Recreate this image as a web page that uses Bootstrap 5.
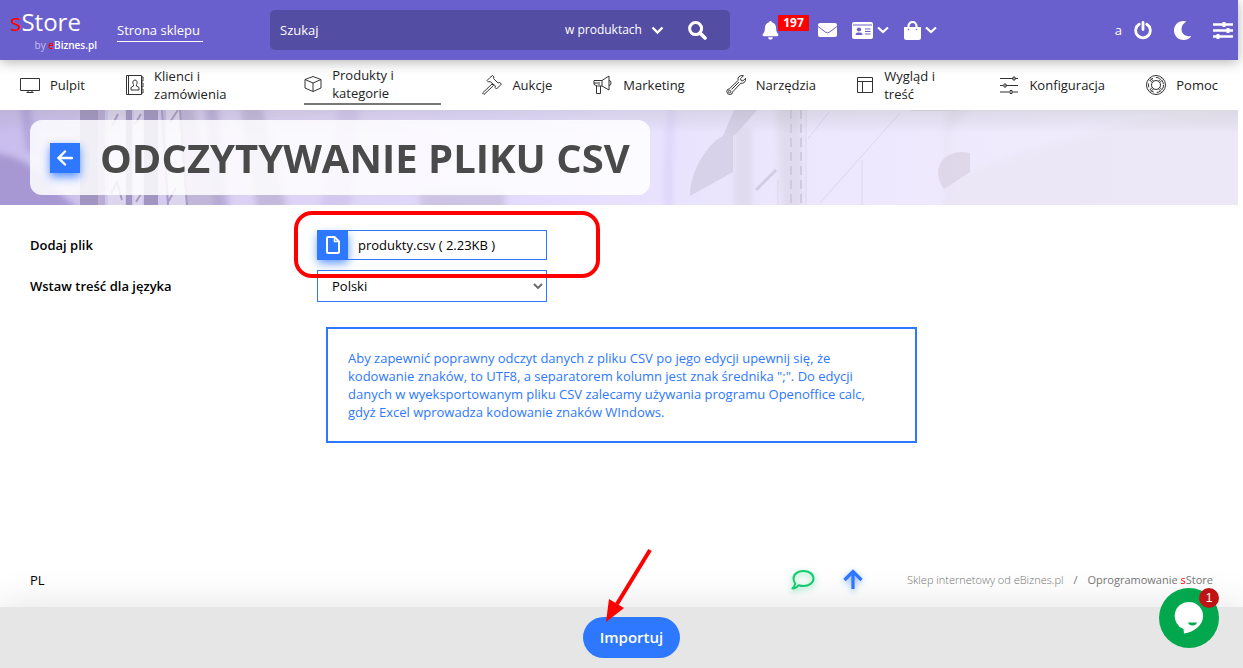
<!DOCTYPE html>
<html lang="pl">
<head>
<meta charset="utf-8">
<meta name="viewport" content="width=device-width, initial-scale=1">
<title>sStore – Odczytywanie pliku CSV</title>
<link href="https://cdn.jsdelivr.net/npm/bootstrap@5.3.0/dist/css/bootstrap.min.css" rel="stylesheet">
<style>
  :root { --accent: #2e78ff; --brand: #6a60cd; }
  body { font-family: "Open Sans", "Noto Sans", sans-serif; font-size: 13px; line-height: 18px; color: #000; background: #fff; padding-right: 5px; }
  a { color: inherit; text-decoration: none; }
  svg { flex: none; display: block; }

  .topbar { height: 60px; background: var(--brand); color: #fff; box-shadow: 0 2px 12px rgba(0,0,0,.3); z-index: 3; padding-left: 10px; padding-right: 5px; }
  .logo { width: 87px; margin-right: 20px; padding-bottom: 2px; }
  .logo-name { font-size: 24px; line-height: 32px; }
  .logo-by { font-size: 10px; line-height: 14px; color: #c3bfeb; }
  .logo-by b { color: #fff; font-weight: 600; }
  .red { color: #f00 !important; }
  .shop-link { border-bottom: 1px solid #fff; width: 86px; padding-top: 3px; padding-bottom: 2px; }
  .search { width: 460px; height: 40px; background: #544da4; border-radius: 5px; margin-left: 67px; padding: 0 23px 0 10px; }
  .search input, .search select { background: none; border: 0; outline: 0; color: #fff; padding: 0; appearance: none; }
  .search input::placeholder { color: #fff; opacity: 1; }
  .search select { font-size: 12px; width: 82px; }
  .plain { background: none; border: 0; padding: 0; color: inherit; }
  .tools { margin-left: 32px; gap: 15px; }
  .count { left: 16px; top: -6px; background: #f00; font-size: 12px; line-height: 16px; font-weight: 700; width: 31px; border-radius: 1px; text-align: center; }
  .account { gap: 22px; }

  .mainnav { height: 50px; padding: 0 20px; color: #222; }
  .mainnav a { gap: 10px; height: 39px; }
  .mainnav .wide { width: 137px; }
  .mainnav .mid { width: 102px; }
  .mainnav .current { border-bottom: 2px solid #777; }
  .mainnav svg { fill: none; stroke: #333; stroke-width: 1; }

  .hero { height: 95px; padding: 10px 30px; background: #eeeafc; }
  .hero-art { inset: 0; width: 100%; height: 100%; }
  .hero-title { height: 75px; width: 620px; max-width: 100%; background: rgba(255,255,255,.85); border-radius: 12px; padding: 0 20px; gap: 20px; }
  .hero-title h1 { font-size: 40px; line-height: 48px; font-weight: 700; color: #4a4a4a; }
  .blue-tile { width: 30px; height: 30px; background: var(--accent); color: #fff; box-shadow: 0 4px 10px rgba(46,120,255,.8); }
  .field .blue-tile { height: 28px; }

  .import-form { padding: 25px 30px 0; }
  .form-line { min-height: 30px; }
  .form-line + .form-line { margin-top: 10px; }
  .form-line > label { width: 287px; font-weight: 600; }
  .field { width: 230px; border: 1px solid var(--accent); }
  .field input, .field select { border: 0; outline: 0; background: none; color: #000; width: 100%; appearance: none; }
  .field input { padding: 0 10px; }
  .field select { padding: 0 14px; height: 30px; }
  .chevron { right: 3px; top: 12px; pointer-events: none; }
  .marker { left: -23px; top: -19px; width: 306px; height: 67px; border: 4px solid #f00; border-radius: 18px; pointer-events: none; z-index: 2; }
  .notice { margin: 25px 0 0 296px; width: 591px; border: 2px solid var(--accent); color: var(--accent); padding: 20px; }

  .foot { padding: 0 25px 16px 30px; }
  .foot-icons { gap: 28px; margin-right: 44px; }
  .foot-text { font-size: 11px; color: #777; gap: 10px; }
  .thin { font-weight: 300; }
  .action-bar { height: 61px; background: #e6e6e6; box-shadow: 0 0 40px rgba(0,0,0,.12); margin-right: -5px; padding-right: 5px; padding-left: 25px; }
  .btn-import { height: 41px; width: 97px; border-radius: 21px; background: var(--accent); color: #fff; font-size: 15px; font-weight: 600; padding: 0; }
  .btn-import:hover { background: #1c64e6; color: #fff; }
  .arrow { left: 19px; top: -70px; pointer-events: none; }
  .chat { right: 24px; bottom: 20px; width: 60px; height: 60px; border-radius: 50%; background: #03a84e; z-index: 1040; }
  .chat-count { right: 0; top: 0; width: 20px; height: 20px; line-height: 20px; border-radius: 50%; background: #c01414; color: #fff; font-size: 12px; font-family: "Liberation Sans", sans-serif; }
</style>
</head>
<body class="d-flex flex-column min-vh-100">

<header class="topbar d-flex align-items-center position-relative">
  <a href="#" class="logo">
    <div class="logo-name"><span class="red">s</span>Store</div>
    <div class="logo-by text-end"><span>by </span><b><span class="red">e</span>Biznes.pl</b></div>
  </a>
  <a href="#" class="shop-link text-nowrap">Strona sklepu</a>
  <form class="search d-flex align-items-center">
    <input type="search" class="flex-grow-1" placeholder="Szukaj" aria-label="Szukaj">
    <select aria-label="Zakres wyszukiwania"><option>w produktach</option></select>
    <svg class="ms-1 me-4" width="13" height="9" viewBox="0 0 13 9" fill="none" stroke="#fff" stroke-width="2.4"><path d="M1.500 1.500l5 5 5-5"/></svg>
    <button class="plain" type="button" aria-label="Wyszukaj"><svg width="19" height="19" viewBox="0 0 19 19" fill="none" stroke="#fff" stroke-width="3"><circle cx="7.600" cy="7.600" r="6"/><path d="M12 12l5 5" stroke-width="3.600" stroke-linecap="round"/></svg></button>
  </form>
  <div class="tools d-flex align-items-center">
    <a href="#" class="position-relative me-4" aria-label="Powiadomienia">
      <svg width="17" height="19" viewBox="0 0 16 19" fill="#fff"><path d="M8 0c.8 0 1.200.5 1.200 1.300 2.800.6 4.400 2.800 4.400 5.700 0 3.600.9 4.600 2 5.900.8 1 .2 2.300-1 2.300H1.400c-1.200 0-1.800-1.300-1-2.300 1.100-1.300 2-2.300 2-5.900 0-2.900 1.600-5.100 4.400-5.700C6.800.5 7.200 0 8 0zM5.600 16.300h4.800a2.400 2.400 0 0 1-4.800 0z"/></svg>
      <span class="count position-absolute">197</span>
    </a>
    <a href="#" aria-label="Wiadomości"><svg width="19" height="14" viewBox="0 0 19 14"><rect width="19" height="14" rx="2" fill="#fff"/><path d="M0 3.500l7.500 5.600q2 1.300 4 0L19 3.500" fill="none" stroke="#6a60cd"/></svg></a>
    <a href="#" class="d-flex align-items-center gap-1" aria-label="Klienci">
      <svg width="21" height="17" viewBox="0 0 21 17"><rect width="21" height="17" rx="2" fill="#fff"/><path d="M1 3h19" stroke="#6a60cd"/><g fill="#6a60cd"><circle cx="7" cy="7.500" r="2.100"/><path d="M3.500 13q0-2.500 2.500-2.500h2q2.500 0 2.500 2.500z"/><path d="M13 6.500h5.500v1H13zm0 2.500h5.500v1H13zm0 2.500h5.500v1H13z"/></g></svg>
      <svg width="12" height="8" viewBox="0 0 12 8" fill="none" stroke="#fff" stroke-width="2.200"><path d="M1 1.500l5 4.500 5-4.500"/></svg>
    </a>
    <a href="#" class="d-flex align-items-center gap-1" aria-label="Zamówienia">
      <svg width="17" height="19" viewBox="0 0 17 19"><path d="M0 6h17v10.500a2.500 2.500 0 0 1-2.500 2.500h-12A2.500 2.500 0 0 1 0 16.500z" fill="#fff"/><path d="M4.500 8V5a4 4 0 0 1 8 0v3" fill="none" stroke="#fff" stroke-width="2.200"/><circle cx="4.500" cy="8.500" r=".8" fill="#6a60cd"/><circle cx="12.500" cy="8.500" r=".8" fill="#6a60cd"/></svg>
      <svg width="12" height="8" viewBox="0 0 12 8" fill="none" stroke="#fff" stroke-width="2.200"><path d="M1 1.500l5 4.500 5-4.500"/></svg>
    </a>
  </div>
  <div class="account d-flex align-items-center ms-auto">
    <div class="d-flex align-items-center">
      <span class="me-2 pe-1">a</span>
      <a href="#" aria-label="Wyloguj"><svg width="18" height="19" viewBox="0 0 18 19" fill="none" stroke="#fff" stroke-width="2.800" stroke-linecap="round"><path d="M5.200 3.300a7.300 7.300 0 1 0 7.600 0M9 1.500v7"/></svg></a>
    </div>
    <button class="plain" aria-label="Tryb nocny"><svg width="17" height="19" viewBox="0 0 17 19" fill="#fff"><path d="M9.500 0C4 0 0 4.200 0 9.500S4.200 19 9.500 19c3 0 5.500-1.200 7.300-3.300.3-.4 0-.8-.4-.7C11 16 7.500 12.500 7.500 8.300c0-3 1.500-5.600 4.200-7.200.4-.2.3-.8-.2-.9z"/></svg></button>
    <button class="plain" aria-label="Ustawienia"><svg width="20" height="17" viewBox="0 0 20 17" fill="none" stroke="#fff"><path d="M0 2.500h20M0 8.500h20M0 14.500h20" stroke-width="2.400"/><path d="M11 0v5M15 6v5M5 12v5" stroke-width="3"/></svg></button>
  </div>
</header>

<nav class="mainnav d-flex align-items-center justify-content-between">
  <a href="#" class="d-flex align-items-center"><svg width="20" height="20" viewBox="0 0 20 20"><path d="M.5 3.500h19v12H.5zM8 15.500v2M12 15.500v2M6.500 17.500h7"/></svg>Pulpit</a>
  <a href="#" class="wide d-flex align-items-center"><svg width="18" height="20" viewBox="0 0 18 20"><path d="M.5.500h15v19H.5zM2.500.500v19M15.500 2h1.500v4h-1.500M15.500 8h1.500v4h-1.500M15.500 14h1.500v4h-1.500M9 5a2.200 2.600 0 0 1 1.500 4.500v1.500l2.500 1.500v2.500H5v-2.500L7.500 11V9.500A2.200 2.600 0 0 1 9 5z"/></svg><span>Klienci i<br>zamówienia</span></a>
  <a href="#" class="wide current d-flex align-items-center" aria-current="page"><svg width="18" height="18" viewBox="0 0 18 18"><path d="M9 1.500l8 3v8.500l-8 3.500-8-3.500V4.500zM1 4.500l8 3.500 8-3.500M9 8v8.500"/></svg><span>Produkty i<br>kategorie</span></a>
  <a href="#" class="d-flex align-items-center"><svg width="20" height="20" viewBox="0 0 20 20"><path d="M8 2.500L10.500.500l1.500 1.500-.5 1.500 4.500 4.500 1.500-.5 2 1.500-5 5-1.500-1.500.5-1.500L8 6.500l-1.500.5L5 5.500zM10 9l1.500 1.500L2 19.500.500 18z"/></svg>Aukcje</a>
  <a href="#" class="d-flex align-items-center"><svg width="20" height="20" viewBox="0 0 20 20"><path d="M1 5.500h8l7-4.500v14L9 11H4.500L1 9.500zM9 5.500V11M16 5.500q2 0 2 2.500t-2 2.500M3.500 11v7.500h4V11M1 8h4M6 7v3"/></svg>Marketing</a>
  <a href="#" class="d-flex align-items-center"><svg width="20" height="20" viewBox="0 0 20 20"><path d="M17.500.700l-3 3 .5 1.800 1.800.5 2.700-2.700q.5 2.700-1.200 4.200-1.700 1.200-3.500.7L6.500 17q.2 2.300-2.500 2.500Q.900 19.500.700 16.500.800 14 3.500 13.700L12.200 5.300q-.8-2 .8-3.600Q15-.200 17.500.700zM5.500 14.500L13 7"/><circle cx="3.600" cy="16.500" r="1.200"/></svg>Narzędzia</a>
  <a href="#" class="mid d-flex align-items-center"><svg width="17" height="18" viewBox="0 0 17 18"><path d="M.5 1.500h15v15H.5zM.5 5.500h15M5.500 5.500v11"/></svg><span>Wygląd i<br>treść</span></a>
  <a href="#" class="d-flex align-items-center"><svg width="19" height="20" viewBox="0 0 19 20"><path d="M0 3.500h13M15 3.500h3M0 10.500h3.500M6 10.500h12M0 17h9.500M12 17h6"/><path d="M13 2h2v3h-2zM4 9h2v3H4zM10 15.500h2v3h-2z"/></svg>Konfiguracja</a>
  <a href="#" class="d-flex align-items-center"><svg width="20" height="20" viewBox="0 0 20 20"><circle cx="10" cy="10" r="9.500"/><circle cx="10" cy="10" r="7.500" stroke-dasharray="4 3"/><circle cx="10" cy="10" r="4.500"/><path d="M3.500 4.800l3 3M4.800 3.500l3 3M16.500 4.800l-3 3M15.200 3.500l-3 3M3.500 15.200l3-3M4.800 16.500l3-3M16.500 15.200l-3-3M15.200 16.500l-3-3"/></svg>Pomoc</a>
</nav>

<section class="hero position-relative overflow-hidden">
  <svg class="hero-art position-absolute" viewBox="0 0 1238 95" preserveAspectRatio="none" aria-hidden="true">
    <defs>
      <linearGradient id="base"><stop offset="0" stop-color="#c9bdee"/><stop offset=".08" stop-color="#cfc5ec"/><stop offset=".2" stop-color="#dbd2f4"/><stop offset=".4" stop-color="#e2dafd"/><stop offset=".52" stop-color="#e8e2fe"/><stop offset=".6" stop-color="#ebe6fd"/><stop offset=".75" stop-color="#eee9fd"/><stop offset="1" stop-color="#f2effd"/></linearGradient>
      <linearGradient id="shade" x2="0" y2="1"><stop offset="0" stop-color="#888" stop-opacity=".18"/><stop offset=".25" stop-color="#888" stop-opacity="0"/></linearGradient>
      <filter id="soft"><feGaussianBlur stdDeviation="3"/></filter>
      <filter id="fine"><feGaussianBlur stdDeviation=".7"/></filter>
    </defs>
    <rect width="1238" height="95" fill="url(#base)"/>
    <g filter="url(#soft)">
      <path d="M-10 42q32 4 50 22t45 41H-10z" fill="#a797d2"/>
      <path d="M20-5h10l6 50-10-5z" fill="#b3a4dc"/>
      <path d="M162-5h30l30 105h-48zM240-5h22l25 105h-30z" fill="#aaa0c4" opacity=".5"/>
      <path d="M205-5h12l12 105h-14z" fill="#9f91c4" opacity=".5"/>
      <path d="M340-5h20l-10 105h-30z" fill="#cbbfe9" opacity=".6"/>
      <path d="M420 100V82h85v18z" fill="#c4bad8" opacity=".7"/>
      <path d="M669-5h5l-2 60v45h-7V50z" fill="#ddd4f8"/>
      <path d="M776-5h26v105h-20zM734 18h18v82h-18z" fill="#d9d4e4" opacity=".6"/>
      <path d="M955-5h20l-25 25v80h-5V0z" fill="#e4e0f0" opacity=".6"/>
      <path d="M952 70Q1100 5 1250 0v105H945z" fill="#e9e6f3" opacity=".7"/>
    </g>
    <g filter="url(#fine)">
      <path d="M735-2h24L736 24l-3 2v36l-43 24q0-25 20-50 8-8 13-10z" fill="#cfc9df" opacity=".7"/>
      <path d="M756 80l20-20" stroke="#d2cce0" stroke-width="3"/>
      <path d="M80-2h18v99H80zM126-2h6v99h-6zM144-2h14v99h-14z" fill="#a195c1"/>
      <path d="M98-2h7v99h-7z" fill="#b9acd5"/>
      <path d="M108-2h17v99h-17zM134-2h8v99h-8zM166-2h14l6 99h-18z" fill="#dcd5ee"/>
      <path d="M112 16l6-12M111 84l6-12 5 18M135 14l6-10M136 92l5-8M170 12l8-12M168 92l8-14M180 0l7 95M162 0l6 95" stroke="#a79bc4" stroke-width="2" fill="none"/>
      <path d="M791 0v95M801 0v95" stroke="#d0cadf" stroke-width="2" stroke-dasharray="9 5"/>
      <path d="M778 70v25M806 0v95M808 29l21-27M820 93l80-90M862 50v45" stroke="#ddd7ed" fill="none"/>
      <path d="M911-2h45v3h-45zM944 79Q934 65 941 52q10-13 29-9v19z" fill="#d9d3e5" opacity=".8"/>
    </g>
    <rect width="1238" height="95" fill="url(#shade)"/>
  </svg>
  <div class="hero-title d-flex align-items-center position-relative">
    <a href="#" class="blue-tile flex-shrink-0 d-flex align-items-center justify-content-center" aria-label="Wstecz"><svg width="16" height="16" viewBox="0 0 16 16" fill="none" stroke="#fff" stroke-width="2.400" stroke-linecap="round"><path d="M15 8H2M8 1.500L1.500 8 8 14.500"/></svg></a>
    <h1 class="m-0 text-nowrap">ODCZYTYWANIE PLIKU CSV</h1>
  </div>
</section>

<main class="import-form flex-grow-1">
  <div class="form-line d-flex align-items-center">
    <label for="plik">Dodaj plik</label>
    <div class="position-relative">
      <div class="field d-flex align-items-center">
        <button type="button" class="plain blue-tile d-flex align-items-center justify-content-center flex-shrink-0" aria-label="Wybierz plik"><svg width="14" height="18" viewBox="0 0 14 18" fill="none" stroke="#fff" stroke-width="2"><path d="M1 2q0-1 1-1h6.500L13 5.500V16q0 1-1 1H2q-1 0-1-1z"/><path d="M8.500 1v4.500H13" stroke-width="1.500"/></svg></button>
        <input id="plik" type="text" value="produkty.csv ( 2.23KB )" readonly>
      </div>
      <div class="marker position-absolute"></div>
    </div>
  </div>
  <div class="form-line d-flex align-items-center">
    <label for="jezyk">Wstaw treść dla języka</label>
    <div class="field position-relative">
      <select id="jezyk"><option>Polski</option></select>
      <svg class="chevron position-absolute" width="10" height="7" viewBox="0 0 10 7" fill="none" stroke="#666" stroke-width="1.800"><path d="M1 1l4 4 4-4"/></svg>
    </div>
  </div>
  <p class="notice">Aby zapewnić poprawny odczyt danych z pliku CSV po jego edycji upewnij się, że kodowanie znaków, to UTF8, a separatorem kolumn jest znak średnika ";". Do edycji danych w wyeksportowanym pliku CSV zalecamy używania programu Openoffice calc, gdyż Excel wprowadza kodowanie znaków WIndows.</p>
</main>

<footer class="foot d-flex align-items-center">
  <span class="me-auto">PL</span>
  <div class="foot-icons d-flex align-items-center">
    <a href="#" aria-label="Czat"><svg width="24" height="22" viewBox="0 0 24 22" fill="none" stroke="#13ce70" stroke-width="2" style="filter:drop-shadow(0 2px 3px #13ce7099)"><path d="M12.500 2c5.500 0 10 3.200 10 7.500s-4.500 7.500-10 7.500q-2.500 0-4.700-.8Q5 19.500 1.500 19.500q2.500-2.500 2.700-5Q2.500 12.300 2.500 9.500C2.500 5.200 7 2 12.500 2z" stroke-linejoin="round"/></svg></a>
    <a href="#" aria-label="Do góry"><svg width="20" height="22" viewBox="0 0 20 22" fill="none" stroke="#2e78ff" stroke-width="3.200" style="filter:drop-shadow(0 2px 3px #2e78ff99)"><path d="M10 20V3M1.500 11L10 2.500l8.500 8.500"/></svg></a>
  </div>
  <div class="foot-text d-flex"><a href="#" class="thin">Sklep internetowy od eBiznes.pl</a><span>/</span><a href="#">Oprogramowanie <span class="red">s</span>Store</a></div>
</footer>

<div class="action-bar d-flex align-items-center justify-content-center sticky-bottom">
  <div class="position-relative">
    <button type="button" class="btn btn-import">Importuj</button>
    <svg class="arrow position-absolute" width="50" height="80" viewBox="0 0 50 80"><path d="M48 3L15 57" stroke="#f00" stroke-width="4"/><path d="M4 75L7 52l15 9z" fill="#f00"/></svg>
  </div>
</div>

<button class="chat plain position-fixed d-flex align-items-center justify-content-center" aria-label="Otwórz czat">
  <svg width="30" height="32" viewBox="0 0 30 32"><path d="M15 0a14 14 0 0 1 14 14.500C29 23 20 30 10 31.500L9.500 27A14 14 0 0 1 15 0z" fill="#fff"/><path d="M14 20.500h9q-1 3-4.500 3t-4.500-3z" fill="#03a84e"/></svg>
  <span class="chat-count position-absolute">1</span>
</button>

<script src="https://cdn.jsdelivr.net/npm/bootstrap@5.3.0/dist/js/bootstrap.bundle.min.js"></script>
</body>
</html>
